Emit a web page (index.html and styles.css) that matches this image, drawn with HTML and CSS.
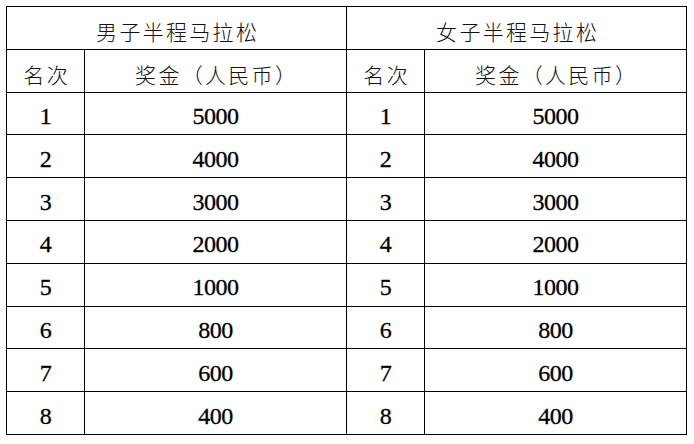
FILE: index.html
```html
<!DOCTYPE html>
<html>
<head>
<meta charset="utf-8">
<link rel="stylesheet" href="styles.css">
</head>
<body>
<table class="prize">
  <colgroup>
    <col class="c-rank"><col class="c-amt"><col class="c-rank"><col class="c-amt">
  </colgroup>
  <tr class="row">
    <th class="zh title" colspan="2" lang="zh">男子半程马拉松</th>
    <th class="zh title" colspan="2" lang="zh">女子半程马拉松</th>
  </tr>
  <tr class="row">
    <th class="zh" lang="zh">名次</th><th class="zh" lang="zh">奖金（人民币）</th>
    <th class="zh" lang="zh">名次</th><th class="zh" lang="zh">奖金（人民币）</th>
  </tr>
  <tr class="row"><td>1</td><td>5000</td><td>1</td><td>5000</td></tr>
  <tr class="row"><td>2</td><td>4000</td><td>2</td><td>4000</td></tr>
  <tr class="row"><td>3</td><td>3000</td><td>3</td><td>3000</td></tr>
  <tr class="row"><td>4</td><td>2000</td><td>4</td><td>2000</td></tr>
  <tr class="row"><td>5</td><td>1000</td><td>5</td><td>1000</td></tr>
  <tr class="row"><td>6</td><td>800</td><td>6</td><td>800</td></tr>
  <tr class="row"><td>7</td><td>600</td><td>7</td><td>600</td></tr>
  <tr class="row"><td>8</td><td>400</td><td>8</td><td>400</td></tr>
</table>
</body>
</html>
```
FILE: styles.css
```css
html, body {
  margin: 0;
  padding: 0;
  background: #fff;
}
body {
  padding: 6px 0 0 6px;
}
.prize {
  border-collapse: collapse;
  table-layout: fixed;
  width: 681px;
  color: #000;
}
.c-rank { width: 78px; }
.c-amt { width: 262px; }
.row { height: 42.8px; }
.prize th, .prize td {
  border: 1px solid #000;
  padding: 0;
  text-align: center;
  vertical-align: middle;
  font-weight: normal;
  line-height: 1;
}
.prize td {
  font-family: "Liberation Serif", "Times New Roman", serif;
  font-size: 24px;
  letter-spacing: -0.5px;
  padding-top: 5px;
  -webkit-text-stroke: 0.3px #000;
}
.prize .zh {
  font-family: "Noto Sans CJK SC", sans-serif;
  font-weight: 300;
  font-size: 21px;
  letter-spacing: 2.3px;
  text-indent: 2.3px;
  padding-top: 7px;
  color: #111;
}
```
